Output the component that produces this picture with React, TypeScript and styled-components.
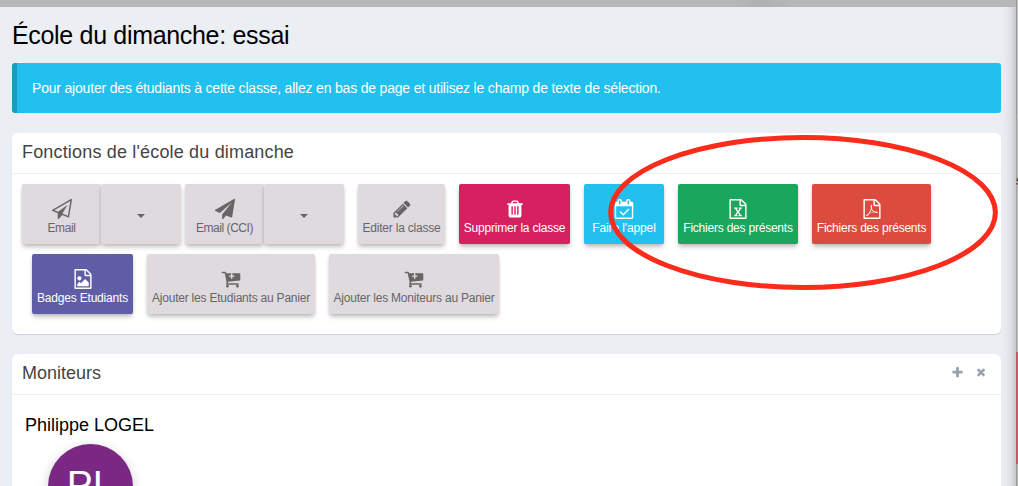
import React from "react";
import styled, { createGlobalStyle } from "styled-components";

const Global = createGlobalStyle`
  * { box-sizing: border-box; }
  html, body { margin: 0; height: 486px; overflow: hidden; }
  body { font-family: "Liberation Sans", Arial, sans-serif; background: #ebeef3; }
`;

const Page = styled.div`
  position: relative;
  display: grid;
  grid-template: 7px 479px / 1fr 2px;
  width: 1018px;
  height: 486px;
  overflow: hidden;
`;

const TopBar = styled.div`
  background: linear-gradient(90deg, #b7b7b7 72%, #b0b0b0 75%, #b7b7b7 78%);
`;

const Content = styled.main`
  padding: 13px 15px 0 12px;
  overflow: hidden;
  background: linear-gradient(90deg, #ebeef3 1001px, #e6e9ee 1006px, #dcdfe4 1011px, #c6c9cd 1016px);
`;

const Edge = styled.aside`
  grid-column: 2;
  grid-row: 1 / 3;
  display: flex;
  flex-direction: column;
  background: #b9b9b9;
  overflow: hidden;
`;

const EdgeBlock = styled.div<{ $h: number; $from: string; $to: string }>`
  flex: none;
  height: ${(p) => p.$h}px;
  background: linear-gradient(90deg, ${(p) => p.$from} 1px, ${(p) => p.$to} 1px);
  overflow: hidden;
`;

const EdgeLetter = styled.div`
  margin: 53px 0 0;
  font-size: 13px;
  line-height: 20px;
  color: #222;
`;

const Title = styled.h1`
  margin: 0 0 13px;
  font-size: 25px;
  line-height: 30px;
  font-weight: 400;
  letter-spacing: -0.32px;
  color: #000;
`;

const Callout = styled.div`
  height: 50px;
  padding-left: 15px;
  border-left: 5px solid #1c9abf;
  border-radius: 3px;
  background: #21c0ef;
  color: #fff;
  font-size: 14px;
  line-height: 50px;
  letter-spacing: -0.19px;
`;

const Box = styled.section<{ $h: number }>`
  height: ${(p) => p.$h}px;
  margin-top: 20px;
  border-radius: 6px;
  background: #fff;
  box-shadow: 0 1px 1px rgba(0, 0, 0, 0.12);
`;

const BoxHeader = styled.header`
  display: flex;
  align-items: center;
  justify-content: space-between;
  height: 41px;
  padding: 0 14px 3px 10px;
  border-bottom: 1px solid #f2f2f2;
`;

const BoxTitle = styled.h3<{ $ls: number }>`
  margin: 0;
  font-size: 18px;
  line-height: 20px;
  font-weight: 400;
  letter-spacing: ${(p) => p.$ls}px;
  color: #444;
`;

const Tools = styled.div`
  display: flex;
  gap: 11px;
  color: #97a0b3;
`;

const Actions = styled.div`
  display: flex;
  flex-wrap: wrap;
  gap: 10px 4px;
  padding: 10px;
`;

const Group = styled.div`
  display: flex;
`;

const AppButton = styled.button<{ $w: number; $bg?: string; $loose?: boolean; $ls?: number }>`
  display: flex;
  flex-direction: column;
  align-items: center;
  width: ${(p) => p.$w}px;
  height: 60px;
  margin: 0 0 0 ${(p) => (p.$loose ? 10 : 0)}px;
  padding: 15px 0 0;
  border: 0;
  border-radius: 2px;
  background: ${(p) => p.$bg ?? "#dfdade"};
  color: ${(p) => (p.$bg ? "#fff" : "#666")};
  box-shadow: 0 4px 5px -1px rgba(0, 0, 0, 0.22), 0 1px 3px rgba(0, 0, 0, 0.1);
  font: 12px/19px "Liberation Sans", Arial, sans-serif;
  letter-spacing: ${(p) => p.$ls ?? 0}px;
  white-space: nowrap;
`;

const Caret = styled.span`
  margin-top: 15px;
  border-top: 4px solid #666;
  border-left: 4px solid transparent;
  border-right: 4px solid transparent;
`;

const Person = styled.div`
  padding: 20px 13px 0;
`;

const PersonName = styled.div`
  font-size: 18px;
  line-height: 20px;
  letter-spacing: 0;
  color: #000;
`;

const Avatar = styled.div`
  width: 85px;
  height: 85px;
  margin: 9px 0 0 23px;
  border-radius: 50%;
  background: #7b2885;
  box-shadow: 0 3px 12px rgba(0, 0, 0, 0.2);
  color: #fff;
  font-size: 39px;
  line-height: 82px;
  text-align: center;
`;

const Highlight = styled.svg`
  position: absolute;
  left: 600px;
  top: 130px;
  pointer-events: none;
`;

const FILE =
  "M1596 380q28 28 48 76t20 88v1152q0 40-28 68t-68 28h-1344q-40 0-68-28t-28-68v-1600q0-40 28-68t68-28h896q40 0 88 20t76 48zm-444-244v376h376q-10-29-22-41l-313-313q-12-12-41-22zm384 1528v-1024h-416q-40 0-68-28t-28-68v-416h-768v1536h1280z";

const icons = {
  planeOutline:
    "M1764 11q33 24 27 64l-256 1536q-5 29-32 45-14 8-31 8-11 0-24-5l-527-215-298 327q-18 21-47 21-14 0-23-4-19-7-30-23.5t-11-36.5v-452l-472-193q-37-14-40-55-3-39 32-59l1664-960q35-21 68 2zm-342 1499l221-1323-1434 827 336 137 863-639-478 797z",
  plane:
    "M1764 11q33 24 27 64l-256 1536q-5 29-32 45-14 8-31 8-11 0-24-5l-453-185-242 295q-18 23-49 23-13 0-22-4-19-7-30.5-23.5t-11.5-36.5v-349l864-1059-1069 925-395-162q-37-14-40-55-2-40 32-59l1664-960q15-9 32-9 20 0 36 11z",
  pencil:
    "M491 1536l91-91-235-235-91 91v107h128v128h107zm523-928q0-22-22-22-10 0-17 7l-542 542q-7 7-7 17 0 22 22 22 10 0 17-7l542-542q7-7 7-17zm-54-192l416 416-832 832h-416v-416zm683 96q0 53-37 90l-166 166-416-416 166-165q36-38 90-38 53 0 91 38l235 234q37 39 37 91z",
  trash:
    "M704 1376v-704q0-14-9-23t-23-9h-64q-14 0-23 9t-9 23v704q0 14 9 23t23 9h64q14 0 23-9t9-23zm256 0v-704q0-14-9-23t-23-9h-64q-14 0-23 9t-9 23v704q0 14 9 23t23 9h64q14 0 23-9t9-23zm256 0v-704q0-14-9-23t-23-9h-64q-14 0-23 9t-9 23v704q0 14 9 23t23 9h64q14 0 23-9t9-23zm-544-992h448l-48-117q-7-9-17-11h-317q-10 2-17 11zm928 32v64q0 14-9 23t-23 9h-96v948q0 83-47 143.5t-113 60.5h-832q-66 0-113-58.5t-47-141.5v-952h-96q-14 0-23-9t-9-23v-64q0-14 9-23t23-9h309l70-167q15-37 54-63t79-26h320q40 0 79 26t54 63l70 167h309q14 0 23 9t9 23z",
  calendar:
    "M1303 964l-512 512q-10 9-23 9t-23-9l-288-288q-9-10-9-23t9-22l46-46q9-9 22-9t23 9l220 220 444-444q10-9 23-9t22 9l46 46q9 9 9 22t-9 23zm-1175 700h1408v-1024h-1408v1024zm384-1216v-288q0-14-9-23t-23-9h-64q-14 0-23 9t-9 23v288q0 14 9 23t23 9h64q14 0 23-9t9-23zm768 0v-288q0-14-9-23t-23-9h-64q-14 0-23 9t-9 23v288q0 14 9 23t23 9h64q14 0 23-9t9-23zm384-64v1280q0 52-38 90t-90 38h-1408q-52 0-90-38t-38-90v-1280q0-52 38-90t90-38h128v-96q0-66 47-113t113-47h64q66 0 113 47t47 113v96h384v-96q0-66 47-113t113-47h64q66 0 113 47t47 113v96h128q52 0 90 38t38 90z",
  excel:
    FILE +
    "m-979-234v106h281v-106h-75l103-161q5-7 10-16.5t7.5-13.5 3.5-4h2q1 4 5 10 2 4 4.5 7.5t6 8 6.5 8.5l107 161h-76v106h291v-106h-68l-192-273 195-282h67v-107h-279v107h74l-103 159q-4 7-10 16.5t-9 13.5l-2 3h-2q-1-4-5-10-6-11-17-23l-106-159h76v-107h-290v107h68l189 272-194 283h-68z",
  pdf:
    FILE +
    "m-514-593q33 26 84 56 59-7 117-7 147 0 177 49 16 22 2 52 0 1-1 2l-2 2v1q-6 38-71 38-48 0-115-20t-130-53q-221 24-392 83-153 262-242 262-15 0-28-7l-24-12q-1-1-6-5-10-10-6-36 9-40 56-91.5t132-96.5q14-9 23 6 2 2 2 4 52-85 107-197 68-136 104-262-24-82-30.5-159.5t6.5-127.5q11-40 42-40h22q23 0 35 15 18 21 9 68-2 6-4 8 1 3 1 8v30q-2 123-14 192 55 164 146 238zm-576 411q52-24 137-158-51 40-87.5 84t-49.5 74zm398-920q-15 42-2 132 1-7 7-44 0-3 7-43 1-4 4-8-1-1-1-2t-1-2-1-3q-1-22-13-36 0 1-1 2v2zm-124 661q135-54 284-81-2-1-13-9.5t-16-13.5q-76-67-127-176-27 86-83 197-30 56-45 83zm646-16q-24-24-140-24 76 28 124 28 14 0 18-1 0-1-2-3z",
  image:
    FILE +
    "m-128-448v320h-1024v-192l192-192 128 128 384-384zm-832-192q-80 0-136-56t-56-136 56-136 136-56 136 56 56 136-56 136-136 56z",
  cart:
    "M1216 640q0-26-19-45t-45-19h-128v-128q0-26-19-45t-45-19-45 19-19 45v128h-128q-26 0-45 19t-19 45 19 45 45 19h128v128q0 26 19 45t45 19 45-19 19-45v-128h128q26 0 45-19t19-45zm-512 896q0 53-37.5 90.5t-90.5 37.5-90.5-37.5-37.5-90.5 37.5-90.5 90.5-37.5 90.5 37.5 37.5 90.5zm896 0q0 53-37.5 90.5t-90.5 37.5-90.5-37.5-37.5-90.5 37.5-90.5 90.5-37.5 90.5 37.5 37.5 90.5zm128-1088v512q0 24-16 42.5t-41 21.5l-1044 122q1 7 4.5 21.5t6 26.5 2.5 22q0 16-24 64h920q26 0 45 19t19 45-19 45-45 19h-1024q-26 0-45-19t-19-45q0-14 11-39.5t29.5-59.5 20.5-38l-177-823h-204q-26 0-45-19t-19-45 19-45 45-19h256q16 0 28.5 6.5t20 15.5 13 24.5 7.5 26.5 5.5 29.5 4.5 25.5h1201q26 0 45 19t19 45z",
  plus:
    "M1600 736v192q0 40-28 68t-68 28h-416v416q0 40-28 68t-68 28h-192q-40 0-68-28t-28-68v-416h-416q-40 0-68-28t-28-68v-192q0-40 28-68t68-28h416v-416q0-40 28-68t68-28h192q40 0 68 28t28 68v416h416q40 0 68 28t28 68z",
  times:
    "M1490 1322q0 40-28 68l-136 136q-28 28-68 28t-68-28l-294-294-294 294q-28 28-68 28t-68-28l-136-136q-28-28-28-68t28-68l294-294-294-294q-28-28-28-68t28-68l136-136q28-28 68-28t68 28l294 294 294-294q28-28 68-28t68 28l136 136q28 28 28 68t-28 68l-294 294 294 294q28 28 28 68z",
};

const Icon = ({ name, size = 20, shift = 0 }: { name: keyof typeof icons; size?: number; shift?: number }) => (
  <svg width={size} height={size} viewBox={`${-shift} 0 1792 1792`} fill="currentColor">
    <path d={icons[name]} />
  </svg>
);

export default function App() {
  return (
    <Page>
      <Global />
      <TopBar />
      <Content>
        <Title>École du dimanche: essai</Title>
        <Callout>
          Pour ajouter des étudiants à cette classe, allez en bas de page et utilisez le champ de texte de sélection.
        </Callout>
        <Box $h={201}>
          <BoxHeader>
            <BoxTitle $ls={0.17}>Fonctions de l'école du dimanche</BoxTitle>
          </BoxHeader>
          <Actions>
            <Group>
              <AppButton $w={79} $ls={-0.4}><Icon name="planeOutline" />Email</AppButton>
              <AppButton $w={80}><Caret /></AppButton>
            </Group>
            <Group>
              <AppButton $w={79} $ls={-0.45}><Icon name="plane" />Email (CCI)</AppButton>
              <AppButton $w={80}><Caret /></AppButton>
            </Group>
            <AppButton $w={87} $loose $ls={-0.22}><Icon name="pencil" />Editer la classe</AppButton>
            <AppButton $w={111} $loose $bg="#d7205f" $ls={-0.2}><Icon name="trash" />Supprimer la classe</AppButton>
            <AppButton $w={80} $loose $bg="#21c0ef" $ls={-0.12}><Icon name="calendar" shift={64} />Faire l'appel</AppButton>
            <AppButton $w={120} $loose $bg="#1aa65d" $ls={-0.22}><Icon name="excel" />Fichiers des présents</AppButton>
            <AppButton $w={119} $loose $bg="#db4c3f" $ls={-0.22}><Icon name="pdf" />Fichiers des présents</AppButton>
            <AppButton $w={101} $loose $bg="#605da7" $ls={-0.2}><Icon name="image" />Badges Etudiants</AppButton>
            <AppButton $w={168} $loose $ls={-0.22}><Icon name="cart" />Ajouter les Etudiants au Panier</AppButton>
            <AppButton $w={170} $loose $ls={-0.21}><Icon name="cart" />Ajouter les Moniteurs au Panier</AppButton>
          </Actions>
        </Box>
        <Box $h={200}>
          <BoxHeader>
            <BoxTitle $ls={0}>Moniteurs</BoxTitle>
            <Tools>
              <Icon name="plus" size={13} />
              <Icon name="times" size={12} />
            </Tools>
          </BoxHeader>
          <Person>
            <PersonName>Philippe LOGEL</PersonName>
            <Avatar>PL</Avatar>
          </Person>
        </Box>
      </Content>
      <Edge>
        <EdgeBlock $h={118} $from="#999" $to="#c6c6c6" />
        <EdgeBlock $h={234} $from="#a0a09e" $to="#c0c0bd">
          <EdgeLetter>s</EdgeLetter>
        </EdgeBlock>
        <EdgeBlock $h={112} $from="#b05a5e" $to="#c9686c" />
        <EdgeBlock $h={22} $from="#999995" $to="#b7b7b2" />
      </Edge>
      <Highlight width="410" height="170" fill="none">
        <ellipse cx="203" cy="82.5" rx="192.4" ry="75" stroke="#fb2c1b" strokeWidth="5" />
      </Highlight>
    </Page>
  );
}
